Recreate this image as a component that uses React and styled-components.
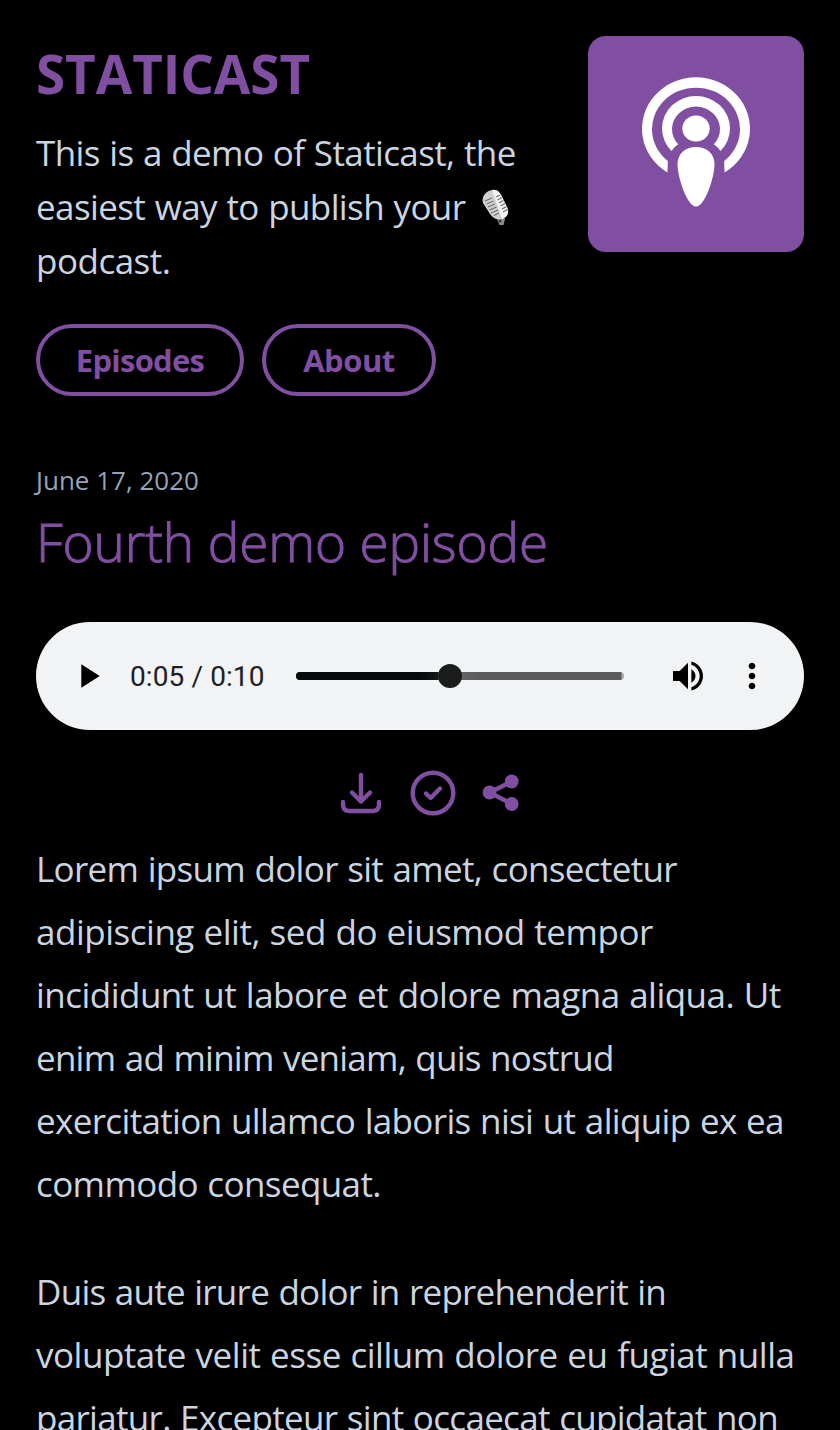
import React from "react";
import styled, { createGlobalStyle } from "styled-components";

const purple = "#814fa2";

const GlobalStyle = createGlobalStyle`
  * { box-sizing: border-box; }
  html { background: #000; }
  body {
    margin: 0;
    background: #000;
    color: #cbd5e0;
    font-family: "Open Sans", "Noto Sans", sans-serif;
    overflow: hidden;
  }
  svg { display: block; }
`;

const Page = styled.main`
  width: 840px;
  height: 1430px;
  padding: 36px;
  overflow: hidden;
`;

const Header = styled.header`
  display: flex;
  justify-content: space-between;
  align-items: flex-start;
`;

const SiteTitle = styled.h1`
  margin: 0 0 14px;
  font-size: 53px;
  line-height: 76px;
  font-weight: 700;
  color: ${purple};
  letter-spacing: ${(p) => p.$track}px;
  white-space: nowrap;
`;

const Description = styled.p`
  margin: 0;
  font-size: 35px;
  line-height: 54px;
`;

const Line = styled.span`
  display: block;
  white-space: nowrap;
  word-spacing: 1px;
  letter-spacing: ${(p) => p.$track || 0}px;
`;

const MicGlyph = styled.svg`
  && { display: inline-block; }
  width: 28px;
  height: 37px;
  margin-left: 6px;
  vertical-align: -6px;
`;

const Cover = styled.div`
  width: 216px;
  height: 216px;
  border-radius: 18px;
  background: ${purple};
  overflow: hidden;
`;

const Nav = styled.nav`
  display: flex;
  gap: 18px;
  margin-top: 36px;
`;

const Pill = styled.a`
  display: flex;
  justify-content: center;
  width: ${(p) => p.$width}px;
  height: 72px;
  border: 4px solid ${purple};
  border-radius: 36px;
  color: ${purple};
  font-size: 31px;
  line-height: 64px;
  font-weight: 700;
  letter-spacing: ${(p) => p.$track}px;
`;

const Episode = styled.article`
  margin-top: 64px;
`;

const DateLine = styled.time`
  display: block;
  font-size: 26px;
  line-height: 40px;
  color: #94a3b8;
`;

const EpisodeTitle = styled.h2`
  margin: 7px 0 0;
  font-size: 53px;
  line-height: 70px;
  font-weight: 300;
  -webkit-text-stroke: 1px ${purple};
  color: ${purple};
  letter-spacing: ${(p) => p.$track}px;
  white-space: nowrap;
`;

const Player = styled.div`
  display: flex;
  align-items: center;
  height: 108px;
  margin-top: 45px;
  padding: 0 32px;
  border-radius: 54px;
  background: #f1f3f4;
  color: #000;
`;

const PlayerIcon = styled.svg`
  flex: none;
  width: 40px;
  height: 40px;
  fill: currentColor;
`;

const Time = styled.span`
  width: 166px;
  margin-left: 22px;
  padding-top: 2px;
  font-family: Roboto, sans-serif;
  font-size: 28px;
  line-height: 40px;
  letter-spacing: 0.1px;
  color: #202124;
  white-space: nowrap;
`;

const Track = styled.div`
  display: flex;
  align-items: center;
  width: 328px;
  height: 8px;
  margin-right: -1px;
  border-radius: 4px;
  background: linear-gradient(90deg, #5b5b5b 325px, #a8a9a9 326px);
`;

const Played = styled.div`
  width: 142px;
  height: 8px;
  border-radius: 4px 0 0 4px;
  background: #070a0a;
`;

const Thumb = styled.div`
  flex: none;
  width: 24px;
  height: 24px;
  border-radius: 50%;
  background: #1b1c1c;
  box-shadow: 0 0 24px rgba(255, 255, 255, 0.25);
`;

const Volume = styled.div`
  margin: 0 24px 0 45px;
`;

const Actions = styled.div`
  display: flex;
  align-items: center;
  justify-content: center;
  height: 46px;
  margin-top: 40px;
  padding-left: 20px;
  color: ${purple};
`;

const Body = styled.div`
  margin-top: 21px;
`;

const Paragraph = styled.p`
  margin: 0 0 45px;
  font-size: 35px;
  line-height: 63px;
`;

function CoverArt() {
  return (
    <svg width="216" height="216" viewBox="0 0 216 216" fill="#fff">
      <path d="M79.300 136.400A54 51.500 0 1 1 136.700 136.400Q136 130 136.300 125A44 41.500 0 1 0 79.700 125Q80 130 79.300 136.400Z" />
      <path d="M83.500 115A34 32.500 0 1 1 132.500 115Q129.500 110.500 125.700 108.300A24 22.500 0 1 0 90.300 108.300Q86.500 110.500 83.500 115Z" />
      <ellipse cx="108" cy="92.500" rx="13.700" ry="13" />
      <path d="M108 111C97 111 89.500 118 89.500 128C89.500 141 99 170.500 108 170.500S126.500 141 126.500 128C126.500 118 119 111 108 111Z" />
    </svg>
  );
}

function Microphone() {
  return (
    <MicGlyph viewBox="0 0 28 37" role="img" aria-label="studio microphone">
      <path d="M15 28L21 26L24 30L22.500 36H18.500Z" fill="#8b8b8b" />
      <path d="M2 14C0 7 6 1 12 1C17 1 19 4 21 8L26 18C29 24 26 29 20 30C15 31 12 29 9 25Z" fill="#d0d0d0" />
      <path d="M11 1C17 0 19 4 21 8L26 18C29 24 25 29 21 30Z" fill="#f2f2f2" />
      <path
        d="M4 12L11 9M5.500 15L12.500 12M7 18L14 15M8.500 21L15.500 18M10 24L17 21M13 26.500L18 24M15 8L19 6M16.500 11L21 8.500M18 14L22.500 11.500M19.500 17L24 14.500M21 20L25.500 17.500M22 23L26.500 20.500"
        stroke="#707070"
        strokeWidth="1.100"
      />
      <circle cx="19" cy="32" r="1.500" fill="#333" />
    </MicGlyph>
  );
}

const intro = [
  ["This is a demo of Staticast, the", -0.62],
  ["easiest way to publish your ", -0.61],
  ["podcast.", -0.5],
];

const paragraphs = [
  [
    ["Lorem ipsum dolor sit amet, consectetur", -0.68],
    ["adipiscing elit, sed do eiusmod tempor", -0.48],
    ["incididunt ut labore et dolore magna aliqua. Ut", -0.52],
    ["enim ad minim veniam, quis nostrud", -0.75],
    ["exercitation ullamco laboris nisi ut aliquip ex ea", -0.65],
    ["commodo consequat.", -0.61],
  ],
  [
    ["Duis aute irure dolor in reprehenderit in", -0.74],
    ["voluptate velit esse cillum dolore eu fugiat nulla", -0.48],
    ["pariatur. Excepteur sint occaecat cupidatat non", -0.69],
  ],
];

export default function App() {
  return (
    <Page>
      <GlobalStyle />
      <Header>
        <div>
          <SiteTitle $track={-0.1}>STATICAST</SiteTitle>
          <Description>
            {intro.map(([text, track], i) => (
              <Line key={text} $track={track}>
                {text}
                {i === 1 && <Microphone />}
              </Line>
            ))}
          </Description>
        </div>
        <Cover>
          <CoverArt />
        </Cover>
      </Header>
      <Nav>
        <Pill $width={208} $track={-0.75}>Episodes</Pill>
        <Pill $width={174} $track={-0.5}>About</Pill>
      </Nav>
      <Episode>
        <DateLine>June 17, 2020</DateLine>
        <EpisodeTitle $track={-0.1}>Fourth demo episode</EpisodeTitle>
        <Player>
          <PlayerIcon viewBox="0 0 24 24">
            <path d="M8 5v14l11-7z" />
          </PlayerIcon>
          <Time>0:05 / 0:10</Time>
          <Track>
            <Played />
            <Thumb />
          </Track>
          <Volume>
            <PlayerIcon viewBox="0 0 24 24">
              <path d="M3 9v6h4l5 5V4L7 9H3zm13.500 3c0-1.770-1.020-3.290-2.500-4.030v8.050c1.480-.730 2.500-2.250 2.500-4.020zM14 3.230v2.060c2.890.860 5 3.540 5 6.710s-2.110 5.850-5 6.710v2.060c4.010-.910 7-4.490 7-8.770s-2.990-7.860-7-8.770z" />
            </PlayerIcon>
          </Volume>
          <PlayerIcon viewBox="0 0 24 24">
            <path d="M12 8c1.100 0 2-.9 2-2s-.9-2-2-2-2 .9-2 2 .9 2 2 2zm0 2c-1.100 0-2 .9-2 2s.9 2 2 2 2-.9 2-2-.9-2-2-2zm0 6c-1.100 0-2 .9-2 2s.9 2 2 2 2-.9 2-2-.9-2-2-2z" />
          </PlayerIcon>
        </Player>
        <Actions>
          <svg width="188" height="46" viewBox="0 0 188 46" fill="none" stroke="currentColor" strokeWidth="4.400" strokeLinecap="round" strokeLinejoin="round">
            <path d="M25 5V31.500M16 22.500L25 31.500L34 22.500M7 32V34.500Q7 41 13.500 41H36.500Q43 41 43 34.500V32" />
            <circle cx="97" cy="23" r="20.300" />
            <path d="M90 23.500L94.700 28L104 18.500" />
            <path d="M176 11.500L153.500 22.500L176 34" />
            <g fill="currentColor" stroke="none">
              <circle cx="175.700" cy="11.500" r="6.900" />
              <circle cx="153.500" cy="22.500" r="6.900" />
              <circle cx="175.700" cy="34" r="6.900" />
            </g>
          </svg>
        </Actions>
        <Body>
          {paragraphs.map((lines) => (
            <Paragraph key={lines[0][0]}>
              {lines.map(([text, track]) => (
                <Line key={text} $track={track}>{text}</Line>
              ))}
            </Paragraph>
          ))}
        </Body>
      </Episode>
    </Page>
  );
}
